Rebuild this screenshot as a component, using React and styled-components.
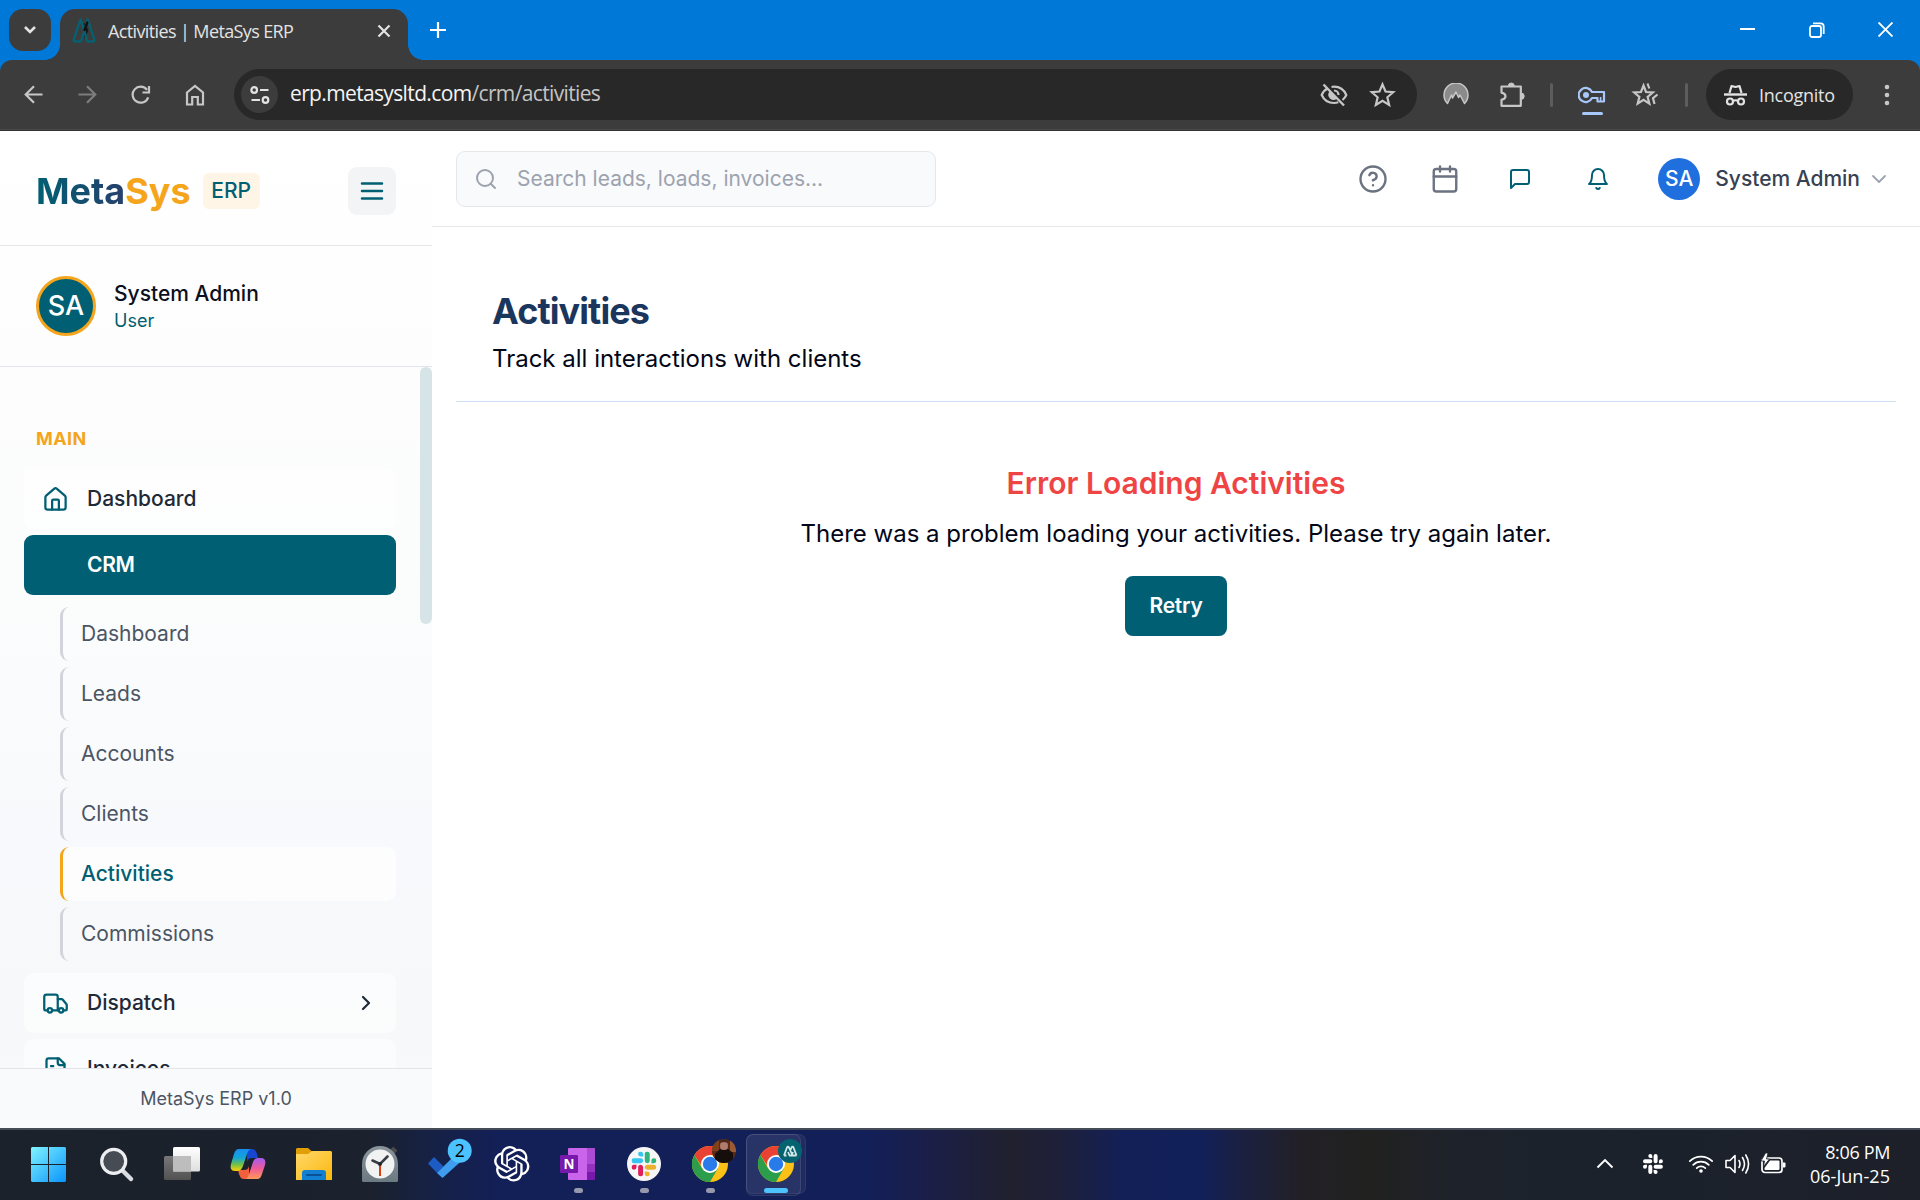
import React from "react";
import styled, { createGlobalStyle, css } from "styled-components";

const Global = createGlobalStyle`
  * { box-sizing: border-box; }
  html, body { margin: 0; padding: 0; overflow: hidden; background: #fff; }
  button { font: inherit; border: 0; padding: 0; margin: 0; background: none; color: inherit; }
`;

const ui = `"Open Sans", "Noto Sans", sans-serif`;
const teal = "#005f73";
const amber = "#f4a51c";

const Screen = styled.div`
  width: 1920px;
  height: 1200px;
  display: flex;
  flex-direction: column;
  overflow: hidden;
  background: #fff;
  font-family: Inter, sans-serif;
`;

/* ---------- browser chrome ---------- */

const TitleBar = styled.header`
  height: 60px;
  flex: none;
  display: flex;
  background: #0078d7;
  padding-left: 9px;
  font-family: ${ui};
`;
const TabSearch = styled.button`
  width: 42px;
  height: 42px;
  margin-top: 9px;
  border-radius: 14px;
  background: #3c3c3c;
  display: grid;
  place-items: center;
`;
const Tab = styled.div`
  position: relative;
  width: 348px;
  height: 51px;
  margin: 9px 0 0 9px;
  padding: 0 17px 8px 12px;
  border-radius: 15px 15px 0 0;
  background: #3c3c3c;
  display: flex;
  align-items: center;
  &::before, &::after {
    content: "";
    position: absolute;
    bottom: 0;
    width: 15px;
    height: 15px;
  }
  &::before { right: 100%; background: radial-gradient(circle at 0 0, transparent 14.5px, #3c3c3c 15px); }
  &::after { left: 100%; background: radial-gradient(circle at 100% 0, transparent 14.5px, #3c3c3c 15px); }
`;
const TabTitle = styled.span`
  flex: 1;
  margin-left: 12px;
  font-size: 18px;
  letter-spacing: -0.62px;
  color: #e3e3e3;
  white-space: nowrap;
`;
const NewTab = styled.button`
  width: 60px;
  height: 60px;
  display: grid;
  place-items: center;
`;
const WindowButtons = styled.div`
  margin-left: auto;
  display: flex;
`;
const WindowButton = styled.button`
  width: 69px;
  height: 59px;
  display: grid;
  place-items: center;
`;
const ToolbarBack = styled.div`
  height: 71px;
  flex: none;
  background: #0078d7;
`;
const Toolbar = styled.div`
  height: 71px;
  display: flex;
  align-items: flex-start;
  padding: 9px 0 0 6px;
  background: #3c3c3c;
  border-radius: 12px 12px 0 0;
  border-bottom: 1px solid #343436;
  box-shadow: inset 0 -1px 0 #4a4a4a;
  font-family: ${ui};
  > * { flex: none; }
`;
const NavButton = styled.button`
  width: 54px;
  height: 51px;
  display: grid;
  place-items: center;
`;
const AddressBar = styled.div`
  width: 1183px;
  height: 51px;
  margin-left: 12px;
  padding: 0 11px 0 7px;
  border-radius: 26px;
  background: #282828;
  display: flex;
  align-items: center;
`;
const SiteInfo = styled.span`
  width: 37px;
  height: 37px;
  border-radius: 50%;
  background: #3c3c3c;
  display: grid;
  place-items: center;
`;
const Url = styled.span`
  flex: 1;
  margin-left: 12px;
  font-size: 21px;
  letter-spacing: -0.64px;
  line-height: 49px;
  height: 51px;
  color: #c4c4c4;
  b { font-weight: 400; color: #f4f4f4; }
`;
const BarIcon = styled.span`
  width: ${(p) => p.$w || 48}px;
  height: 51px;
  display: grid;
  place-items: center;
`;
const Extensions = styled.div`
  display: flex;
  align-items: center;
  padding-left: 11px;
`;
const Divider = styled.i`
  width: 3px;
  height: 24px;
  border-radius: 2px;
  background: #5d5d5d;
  margin: ${(p) => p.$m};
`;
const KeyIcon = styled(BarIcon)`
  position: relative;
  &::after {
    content: "";
    position: absolute;
    left: 50%;
    margin-left: -10.5px;
    bottom: 5px;
    width: 21px;
    height: 3px;
    border-radius: 2px;
    background: #a8c7fa;
  }
`;
const Incognito = styled.div`
  width: 147px;
  height: 51px;
  border-radius: 26px;
  background: #282828;
  display: flex;
  align-items: center;
  padding-left: 18px;
  gap: 12px;
  font-size: 18px;
  letter-spacing: -0.25px;
  color: #e3e3e3;
`;

/* ---------- application ---------- */

const AppArea = styled.div`
  height: 997px;
  flex: none;
  display: flex;
`;
const Sidebar = styled.aside`
  width: 432px;
  flex: none;
  display: flex;
  flex-direction: column;
  background: linear-gradient(180deg, #ffffff 0%, #fdfdfd 24%, #fbfcfc 48%, #f8f9fc 72%, #f6f8f9 90%, #f9f9fc 100%);
`;
const Brand = styled.div`
  height: 115px;
  flex: none;
  display: flex;
  align-items: center;
  padding: 5px 36px 0;
  border-bottom: 1px solid #e4e6ea;
`;
const Logo = styled.div`
  font-size: 36px;
  font-weight: 700;
  line-height: 54px;
  display: flex;
`;
const LogoMain = styled.span`
  color: transparent;
  background: linear-gradient(90deg, ${teal}, #27406b);
  -webkit-background-clip: text;
  background-clip: text;
`;
const LogoAccent = styled.span`
  color: ${amber};
`;
const Badge = styled.span`
  height: 36px;
  width: 57px;
  margin-left: 12px;
  border-radius: 6px;
  background: #fef5e7;
  color: ${teal};
  font-size: 21px;
  font-weight: 500;
  line-height: 36px;
  text-align: center;
`;
const MenuButton = styled.button`
  width: 48px;
  height: 48px;
  margin-left: auto;
  border-radius: 9px;
  background: #f3f4f6;
  display: grid;
  place-items: center;
`;
const Profile = styled.div`
  height: 121px;
  flex: none;
  display: flex;
  align-items: center;
  padding: 0 36px 1px;
  gap: 18px;
  border-bottom: 1px solid #e2e4ea;
`;
const Avatar = styled.span`
  width: 60px;
  height: 60px;
  border-radius: 50%;
  border: 3px solid ${amber};
  background: ${teal};
  color: #fff;
  font-size: 27px;
  font-weight: 500;
  line-height: 54px;
  text-align: center;
`;
const ProfileText = styled.div`
  padding-top: 2px;
`;
const ProfileName = styled.div`
  font-size: 21px;
  font-weight: 500;
  line-height: 28px;
  color: #0b1020;
`;
const ProfileRole = styled.div`
  font-size: 18px;
  line-height: 26px;
  color: ${teal};
`;
const NavScroll = styled.div`
  flex: 1;
  min-height: 0;
  overflow: hidden;
  display: flex;
  justify-content: space-between;
`;
const NavList = styled.nav`
  width: 396px;
  padding: 58px 0 0 24px;
`;
const ScrollThumb = styled.div`
  width: 12px;
  height: 257px;
  border-radius: 6px;
  background: #d6e4e8;
`;
const SectionLabel = styled.div`
  height: 27px;
  margin: 0 0 17px 12px;
  font-size: 18px;
  font-weight: 700;
  line-height: 27px;
  letter-spacing: 0.45px;
  color: ${amber};
`;
const NavItem = styled.a`
  height: 60px;
  margin-bottom: 6px;
  padding: 0 18px;
  border-radius: 9px;
  display: flex;
  align-items: center;
  font-size: 21px;
  font-weight: 500;
  color: #1f2937;
  background: rgba(255, 255, 255, 0.55);
  ${(p) => p.$active && css`
    background: ${teal};
    color: #fff;
    font-weight: 600;
    letter-spacing: -0.3px;
  `}
`;
const NavIcon = styled.span`
  width: 27px;
  height: 27px;
  margin-right: 18px;
  color: ${teal};
`;
const NavText = styled.span`
  flex: 1;
  padding-bottom: 2px;
`;
const SubList = styled.div`
  padding: 6px 0 12px 36px;
  display: grid;
  gap: 6px;
`;
const SubItem = styled.a`
  height: 54px;
  padding-left: 18px;
  border-left: 3px solid ${(p) => (p.$active ? amber : "#d1d5db")};
  border-radius: 9px;
  font-size: 21px;
  font-weight: ${(p) => (p.$active ? 500 : 400)};
  line-height: 54px;
  color: ${(p) => (p.$active ? teal : "#4b5563")};
  background: ${(p) => (p.$active ? "rgba(255,255,255,.7)" : "transparent")};
`;
const SideFooter = styled.div`
  height: 60px;
  flex: none;
  border-top: 1px solid #e2e4e9;
  background: #f9fafc;
  font-size: 18px;
  line-height: 59px;
  text-align: center;
  color: #4b5563;
`;
const Main = styled.main`
  flex: 1;
  display: flex;
  flex-direction: column;
`;
const TopBar = styled.div`
  height: 96px;
  flex: none;
  display: flex;
  align-items: center;
  padding: 0 29px 0 24px;
  border-bottom: 1px solid #e5e7eb;
`;
const SearchBox = styled.div`
  width: 480px;
  height: 56px;
  border: 1px solid #e5e7eb;
  border-radius: 9px;
  background: #f9fafb;
  display: flex;
  align-items: center;
  padding-left: 17px;
  gap: 19px;
  font-size: 21px;
  color: #9ca3af;
`;
const TopActions = styled.div`
  margin-left: auto;
  display: flex;
  align-items: center;
`;
const TopIcon = styled.button`
  width: ${(p) => p.$w}px;
  height: 60px;
  display: grid;
  place-items: center;
  color: ${(p) => p.$color};
`;
const UserChip = styled.div`
  display: flex;
  align-items: center;
  margin-left: 21px;
  font-size: 21px;
  font-weight: 500;
  color: #374151;
`;
const SmallAvatar = styled.span`
  width: 42px;
  height: 42px;
  margin-right: 15px;
  border-radius: 50%;
  background: #206fdf;
  color: #fff;
  line-height: 42px;
  text-align: center;
`;
const ChevronBox = styled.span`
  margin-left: 7px;
  height: 24px;
  color: #9ca3af;
`;
const PageHeader = styled.section`
  margin: 0 24px;
  height: 175px;
  flex: none;
  padding: 62px 36px 0;
  border-bottom: 1px solid #cfe0f7;
`;
const PageTitle = styled.h1`
  margin: 0;
  font-size: 36px;
  font-weight: 700;
  line-height: 45px;
  letter-spacing: -0.9px;
  color: #1b365d;
`;
const PageSub = styled.p`
  margin: 7px 0 0;
  font-size: 24px;
  line-height: 36px;
  color: #020617;
`;
const ErrorPanel = styled.section`
  margin: 0 24px;
  padding-top: 60px;
  display: flex;
  flex-direction: column;
  align-items: center;
`;
const ErrorTitle = styled.h2`
  margin: 0;
  font-size: 30px;
  font-weight: 600;
  line-height: 42px;
  color: #ef4444;
`;
const ErrorText = styled.p`
  margin: 12px 0 0;
  font-size: 24px;
  line-height: 36px;
  color: #020617;
`;
const RetryButton = styled.button`
  width: 102px;
  height: 60px;
  margin-top: 24px;
  padding-bottom: 2px;
  border-radius: 8px;
  background: ${teal};
  color: #fff;
  font-size: 21px;
  font-weight: 600;
  letter-spacing: -0.25px;
`;

/* ---------- taskbar ---------- */

const Taskbar = styled.footer`
  height: 72px;
  flex: none;
  display: flex;
  padding-left: 16px;
  border-top: 2px solid #454b57;
  background: linear-gradient(90deg, #1c222b 0, #1b212d 370px, #162145 430px, #131f57 500px, #131f58 870px,
    #1b1f48 930px, #20202e 1010px, #1e203a 1060px, #132058 1125px, #122059 1200px, #1b2042 1240px,
    #222026 1300px, #21211f 1370px, #1e222a 1450px, #1b222c 1580px, #1c212b 1760px, #1d2029 1920px);
`;
const TaskSlot = styled.div`
  position: relative;
  width: 66px;
  height: 70px;
  svg { display: block; position: relative; }
`;
const ActiveBack = styled.div`
  position: absolute;
  left: 4px;
  top: 4px;
  width: 60px;
  height: 60px;
  border-radius: 7px;
  background: rgba(255, 255, 255, 0.06);
  border: 1px solid rgba(255, 255, 255, 0.06);
  &::after {
    content: "";
    position: absolute;
    left: -1px;
    top: -1px;
    width: 53px;
    height: 60px;
    border-radius: 7px;
    background: rgba(255, 255, 255, 0.04);
    border: 1px solid rgba(255, 255, 255, 0.09);
  }
`;
const Tray = styled.div`
  margin-left: auto;
  display: flex;
  align-items: center;
  padding: 0 30px 3px 0;
  color: #fff;
  font-family: ${ui};
`;
const TrayIcon = styled.span`
  width: ${(p) => p.$w}px;
  height: 28px;
  display: grid;
  place-items: center;
`;
const Clock = styled.div`
  width: 93px;
  font-size: 18px;
  line-height: 24px;
  text-align: right;
  white-space: nowrap;
`;
const ClockLine = styled.div`
  letter-spacing: ${(p) => p.$ls}px;
`;

/* ---------- icons ---------- */

const Line = ({ size = 24, sw = 2, color = "currentColor", children, ...rest }) => (
  <svg width={size} height={size} viewBox="0 0 24 24" fill="none" stroke={color} strokeWidth={sw}
    strokeLinecap="round" strokeLinejoin="round" style={{ display: "block" }} {...rest}>{children}</svg>
);

const Slack = ({ mono, ...rest }) => (
  <svg viewBox="0 0 54 54" {...rest}>
    <path fill={mono || "#36C5F0"} d="M19.712.133a5.381 5.381 0 0 0-5.376 5.387 5.381 5.381 0 0 0 5.376 5.386h5.376V5.52A5.381 5.381 0 0 0 19.712.133m0 14.365H5.376A5.381 5.381 0 0 0 0 19.884a5.381 5.381 0 0 0 5.376 5.387h14.336a5.381 5.381 0 0 0 5.376-5.387 5.381 5.381 0 0 0-5.376-5.386" />
    <path fill={mono || "#2EB67D"} d="M53.76 19.884a5.381 5.381 0 0 0-5.376-5.386 5.381 5.381 0 0 0-5.376 5.386v5.387h5.376a5.381 5.381 0 0 0 5.376-5.387m-14.336 0V5.52A5.381 5.381 0 0 0 34.048.133a5.381 5.381 0 0 0-5.376 5.387v14.364a5.381 5.381 0 0 0 5.376 5.387 5.381 5.381 0 0 0 5.376-5.387" />
    <path fill={mono || "#ECB22E"} d="M34.048 54a5.381 5.381 0 0 0 5.376-5.387 5.381 5.381 0 0 0-5.376-5.386h-5.376v5.386A5.381 5.381 0 0 0 34.048 54m0-14.365h14.336a5.381 5.381 0 0 0 5.376-5.386 5.381 5.381 0 0 0-5.376-5.387H34.048a5.381 5.381 0 0 0-5.376 5.387 5.381 5.381 0 0 0 5.376 5.386" />
    <path fill={mono || "#E01E5A"} d="M0 34.249a5.381 5.381 0 0 0 5.376 5.386 5.381 5.381 0 0 0 5.376-5.386v-5.387H5.376A5.381 5.381 0 0 0 0 34.25m14.336-.001v14.364A5.381 5.381 0 0 0 19.712 54a5.381 5.381 0 0 0 5.376-5.387V34.25a5.381 5.381 0 0 0-5.376-5.387 5.381 5.381 0 0 0-5.376 5.387" />
  </svg>
);

const Favicon = () => (
  <svg width="24" height="25" viewBox="0 0 24 25" fill="none" strokeLinejoin="round" strokeLinecap="round">
    <path d="M12.500 6.500l2.500 6-3 6" stroke="#16191b" strokeWidth="2.600" />
    <path d="M8.500 1.500L1.800 21.500q-.3 2 1.500 2h4.400q1.200 0 1.600-1.200L12.500 13.500 8.500 1.500z" stroke="#056072" strokeWidth="2.400" />
    <path d="M15.800 1.500L12 12l3 10.300q.4 1.200 1.600 1.200h4.200q1.700 0 1.500-2z" stroke="#056072" strokeWidth="2.400" />
    <path d="M15.300 4.500L12.500 12" stroke="#111" strokeWidth="2.400" />
  </svg>
);

const Task = ({ children }) => <svg width="66" height="70" viewBox="0 0 66 70">{children}</svg>;

const ChromeMark = () => (
  <g transform="translate(34 34)">
    <circle r="18" fill="#fbc116" />
    <path d="M-15.590 -9A18 18 0 0 1 15.590 -9L0 -9L-7 4z" fill="#e94235" />
    <path d="M-15.590 -9A18 18 0 0 0 0 18L7.800 4.500L-7.800 4.500z" fill="#2c9e4b" />
    <circle r="9" fill="#fff" />
    <circle r="7.200" fill="#2a7bea" />
  </g>
);
const Dot = () => <rect x="30" y="58" width="9" height="5" rx="2.500" fill="#9699ad" />;

const openai = "M22.2819 9.8211a5.9847 5.9847 0 0 0-.5157-4.9108 6.0462 6.0462 0 0 0-6.5098-2.9A6.0651 6.0651 0 0 0 4.9807 4.1818a5.9847 5.9847 0 0 0-3.9977 2.9 6.0462 6.0462 0 0 0 .7427 7.0966 5.98 5.98 0 0 0 .511 4.9107 6.051 6.051 0 0 0 6.5146 2.9001A5.9847 5.9847 0 0 0 13.2599 24a6.0557 6.0557 0 0 0 5.7718-4.2058 5.9894 5.9894 0 0 0 3.9977-2.9001 6.0557 6.0557 0 0 0-.7475-7.0729zm-9.022 12.6081a4.4755 4.4755 0 0 1-2.8764-1.0408l.1419-.0804 4.7783-2.7582a.7948.7948 0 0 0 .3927-.6813v-6.7369l2.02 1.1686a.071.071 0 0 1 .038.052v5.5826a4.504 4.504 0 0 1-4.4945 4.4944zm-9.6607-4.1254a4.4708 4.4708 0 0 1-.5346-3.0137l.142.0852 4.783 2.7582a.7712.7712 0 0 0 .7806 0l5.8428-3.3685v2.3324a.0804.0804 0 0 1-.0332.0615L9.74 19.9502a4.4992 4.4992 0 0 1-6.1408-1.6464zM2.3408 7.8956a4.485 4.485 0 0 1 2.3655-1.9728V11.6a.7664.7664 0 0 0 .3879.6765l5.8144 3.3543-2.0201 1.1685a.0757.0757 0 0 1-.071 0l-4.8303-2.7865A4.504 4.504 0 0 1 2.3408 7.872zm16.5963 3.8558L13.1038 8.364 15.1192 7.2a.0757.0757 0 0 1 .071 0l4.8303 2.7913a4.4944 4.4944 0 0 1-.6765 8.1042v-5.6772a.79.79 0 0 0-.407-.667zm2.0107-3.0231l-.142-.0852-4.7735-2.7818a.7759.7759 0 0 0-.7854 0L9.409 9.2297V6.8974a.0662.0662 0 0 1 .0284-.0615l4.8303-2.7866a4.4992 4.4992 0 0 1 6.6802 4.66zM8.3065 12.863l-2.02-1.1638a.0804.0804 0 0 1-.038-.0567V6.0742a4.4992 4.4992 0 0 1 7.3757-3.4537l-.142.0805L8.704 5.459a.7948.7948 0 0 0-.3927.6813zm1.0976-2.3654l2.602-1.4998 2.6069 1.4998v2.9994l-2.5974 1.4997-2.6067-1.4997Z";

const taskIcons = [
  <Task key="start">
    <defs><linearGradient id="win" x1="15" y1="17" x2="50" y2="52" gradientUnits="userSpaceOnUse"><stop stopColor="#80f4ff" /><stop offset="1" stopColor="#0a93fb" /></linearGradient></defs>
    <path fill="url(#win)" d="M16 17h16v17H15V18zM33 17h16l1 1v16H33zM15 35h17v17H16l-1-1zM33 35h17v16l-1 1H33z" />
  </Task>,
  <Task key="search">
    <path d="M41 41l8 8" stroke="#d9dce2" strokeWidth="4.500" strokeLinecap="round" />
    <circle cx="31.700" cy="31.300" r="12" fill="#474b54" stroke="#eceef1" strokeWidth="3.200" />
  </Task>,
  <Task key="views">
    <defs>
      <linearGradient id="tv" x2="0" y2="1"><stop stopColor="#fff" /><stop offset="1" stopColor="#dedede" /></linearGradient>
      <linearGradient id="tg" x2="0" y2="1"><stop stopColor="#777" /><stop offset="1" stopColor="#525252" /></linearGradient>
    </defs>
    <rect x="16" y="26" width="27" height="24" rx="1.500" fill="url(#tg)" />
    <rect x="25" y="17" width="27" height="24.500" rx="1.500" fill="url(#tv)" />
    <path d="M25 26h18v15.500H25z" fill="#bdbdbd" />
  </Task>,
  <Task key="copilot">
    <defs>
      <linearGradient id="ca" x1="0" y1="0" x2="0" y2="1"><stop stopColor="#1a8df0" /><stop offset=".4" stopColor="#12a5d8" /><stop offset=".7" stopColor="#6fc04a" /><stop offset="1" stopColor="#ffd400" /></linearGradient>
      <linearGradient id="cb" x1="0" y1="0" x2="0" y2="1"><stop stopColor="#a55cf0" /><stop offset=".5" stopColor="#ee5a9a" /><stop offset="1" stopColor="#ff9a55" /></linearGradient>
    </defs>
    <path d="M33 19h5c3 0 4 2 5 5l1 4h-6c-3 0-4 1-5 4z" fill="#1746d0" />
    <path d="M35 49h-5c-3 0-4-2-5-5l-1-4h6c3 0 4-1 5-4z" fill="#f0603c" />
    <path d="M25 19h13c-3 0-4 2-5 5l-4 12c-1 3-3 5-6 5h-2c-4 0-5-3-4-7l3-10c1-3 2-5 5-5z" fill="url(#ca)" />
    <path d="M43 49H30c3 0 4-2 5-5l4-12c1-3 3-4 6-4h2c4 0 5 3 4 7l-3 9c-1 3-2 5-5 5z" fill="url(#cb)" />
  </Task>,
  <Task key="files">
    <defs><linearGradient id="fo" x2="1" y2="1"><stop stopColor="#ffd869" /><stop offset="1" stopColor="#fbb80f" /></linearGradient></defs>
    <path d="M17 18h11l4 3.500v7H16V19z" fill="#e09f06" />
    <path d="M16 24h12l4-3h19l1 1v28H16z" fill="url(#fo)" />
    <path d="M22 50v-7q0-3 3-3h18q3 0 3 3v7z" fill="#1280d2" />
    <path d="M27 45h14" stroke="#0b4f96" strokeWidth="2" strokeLinecap="round" />
  </Task>,
  <Task key="clock">
    <defs><linearGradient id="cl" x2="0" y2="1"><stop stopColor="#8a949b" /><stop offset="1" stopColor="#6c7a82" /></linearGradient></defs>
    <rect x="45" y="18" width="6" height="5" rx="1" transform="rotate(42 48 20)" fill="#4a4a48" />
    <path d="M16 51V34a18 18 0 0 1 36 0v17l-1 1H17z" fill="url(#cl)" />
    <circle cx="34" cy="34" r="14.500" fill="#f1f2f2" />
    <path d="M26.500 30.500L34 34l7.500-7.500" stroke="#3a3d42" strokeWidth="2.600" fill="none" strokeLinecap="round" />
    <path d="M34 34v12" stroke="#d9400d" strokeWidth="2" />
    <circle cx="34" cy="34" r="2" fill="#26292c" />
  </Task>,
  <Task key="todo">
    <path d="M16 33.500l6-6.500 9.500 9.500-6.500 6.500z" fill="#1c5cc4" />
    <path d="M25 43l24-24 6.500 6.500L30.500 48z" fill="#3f9df0" />
    <circle cx="47.700" cy="20.700" r="12" fill="#4cc2ff" />
    <text x="47.700" y="27" textAnchor="middle" fontFamily="Open Sans, sans-serif" fontSize="17.500" fill="#000">2</text>
  </Task>,
  <Task key="gpt"><path transform="translate(16 16) scale(1.480)" fill="#fff" d={openai} /></Task>,
  <Task key="onenote">
    <path d="M24 19q0-1 1-1h18v32H25q-1 0-1-1z" fill="#ca64ea" />
    <path d="M43 18h8v8h-8z" fill="#ae4bd5" /><path d="M43 26h8v8h-8z" fill="#ae4bd5" /><path d="M43 34h8v8h-8z" fill="#9332bf" /><path d="M43 42h8v7q0 1-1 1h-7z" fill="#7719aa" />
    <rect x="16" y="25" width="18" height="18" rx="1" fill="#7719aa" />
    <text x="25" y="39" textAnchor="middle" fontFamily="Open Sans, sans-serif" fontWeight="700" fontSize="13.500" fill="#fff">N</text>
    <Dot />
  </Task>,
  <Task key="slack">
    <circle cx="34" cy="34" r="17" fill="#f6f6f6" />
    <Slack x="21.500" y="21.500" width="25" height="25" /><Dot />
  </Task>,
  <Task key="chrome">
    <ChromeMark />
    <defs>
      <clipPath id="ph"><circle cx="48" cy="21" r="12" /></clipPath>
      <filter id="soft"><feGaussianBlur stdDeviation=".7" /></filter>
    </defs>
    <g clipPath="url(#ph)">
      <path d="M36 9h24v24H36z" fill="#5c2b17" />
      <g filter="url(#soft)">
        <path d="M36 9h7v12h-7z" fill="#80401f" /><path d="M54 9h6v13h-6z" fill="#9a5a34" />
        <ellipse cx="48" cy="16" rx="4" ry="5.500" fill="#b07c6c" />
        <path d="M43.500 13q1-4 4.500-4t4.500 4l-4.500-1z" fill="#4a281c" />
        <path d="M44 19q4 2 8 0l5 4v12H39v-11z" fill="#170d0d" />
      </g>
    </g>
    <Dot />
  </Task>,
  <Task key="chrome-active">
    <ChromeMark />
    <circle cx="48" cy="21" r="12" fill="#04636e" />
    <path d="M42 25.500l3-8q1-1.800 2 0l3.500 8h-3L46 22M54.500 25.500l-3-8q-1-1.800-2 0L48 21M51 22l-1.500 3.500h5M42 25.500h2.500" fill="none" stroke="#d6e8ea" strokeWidth="1.800" strokeLinejoin="round" />
    <rect x="22" y="58" width="24" height="5" rx="2.500" fill="#4cc2ff" />
  </Task>,
];

const gray = "#c7c7c7";
const star = "M12 3.600l2.500 5.900 6.400.600-4.900 4.200 1.500 6.300L12 17.200l-5.500 3.400L8 14.300 3.100 10.100l6.400-.600z";

const Browser = () => (
  <>
    <TitleBar>
      <TabSearch><svg width="14" height="10" viewBox="0 0 14 10"><path d="M2 2l5 5 5-5" fill="none" stroke="#e3e3e3" strokeWidth="2.600" /></svg></TabSearch>
      <Tab>
        <Favicon />
        <TabTitle>Activities | MetaSys ERP</TabTitle>
        <svg width="14" height="14" viewBox="0 0 14 14"><path d="M1.500 1.500l11 11M12.500 1.500l-11 11" stroke="#e3e3e3" strokeWidth="2.200" /></svg>
      </Tab>
      <NewTab><svg width="16" height="16" viewBox="0 0 16 16"><path d="M8 0v16M0 8h16" stroke="#fff" strokeWidth="2.200" /></svg></NewTab>
      <WindowButtons>
        <WindowButton><svg width="15" height="15" viewBox="0 0 15 15"><path d="M0 7h15" stroke="#fff" strokeWidth="2" /></svg></WindowButton>
        <WindowButton><svg width="16" height="16" viewBox="0 0 16 16" fill="none" stroke="#fff" strokeWidth="1.800"><rect x="1" y="4" width="11" height="11" rx="2" /><path d="M4 1.300h7.500q3.200 0 3.200 3.200V12" /></svg></WindowButton>
        <WindowButton><svg width="15" height="15" viewBox="0 0 15 15"><path d="M.5.5l14 14M14.500.5l-14 14" stroke="#fff" strokeWidth="1.900" /></svg></WindowButton>
      </WindowButtons>
    </TitleBar>
    <ToolbarBack>
      <Toolbar>
        <NavButton><svg width="19" height="19" viewBox="0 0 19 19"><path d="M18.500 9.500H2M10 1.200L1.700 9.500l8.300 8.300" fill="none" stroke={gray} strokeWidth="2.200" /></svg></NavButton>
        <NavButton><svg width="19" height="19" viewBox="0 0 19 19"><path d="M.5 9.500H17M9 1.200l8.300 8.300L9 17.800" fill="none" stroke="#7d7d7d" strokeWidth="2.200" /></svg></NavButton>
        <NavButton><svg width="20" height="20" viewBox="0 0 20 20"><path d="M17.200 12.300A8 8 0 1 1 16 4.800M18 1v6.500h-6.500" fill="none" stroke={gray} strokeWidth="2.200" /></svg></NavButton>
        <NavButton><svg width="20" height="22" viewBox="0 0 20 22"><path d="M2 8.500L10 2l8 6.500V20.500h-5.200V13H7.200v7.500H2z" fill="none" stroke={gray} strokeWidth="2.200" /></svg></NavButton>
        <AddressBar>
          <SiteInfo><svg width="20" height="18" viewBox="0 0 20 18" fill="none" stroke="#e3e3e3" strokeWidth="2.200"><circle cx="4.200" cy="4" r="2.800" /><path d="M10 4h8.500M1.500 14H10" /><circle cx="15.500" cy="14" r="2.800" /></svg></SiteInfo>
          <Url><b>erp.metasysltd.com</b>/crm/activities</Url>
          <BarIcon>
            <svg width="28" height="26" viewBox="0 0 28 26" fill="none" stroke={gray} strokeWidth="2.200">
              <path d="M8 6.300Q3.500 8.500 1.700 13q3.600 8 12.300 8 2.300 0 4.300-.700M11.500 5q1.300-.300 2.500-.300 8.700 0 12.300 8.300-1.300 3-3.800 5" />
              <path d="M9.500 9.500a5.200 5.200 0 0 0 7.300 7.300z" fill={gray} stroke="none" /><path d="M14 8.500a4.500 4.500 0 0 1 4.500 4.500" /><path d="M3.500 2.500l20.500 21" strokeWidth="2.400" />
            </svg>
          </BarIcon>
          <BarIcon><Line size={29} sw={1.8} color={gray} strokeLinejoin="miter"><path d={star} /></Line></BarIcon>
        </AddressBar>
        <Extensions>
          <BarIcon $w={56}>
            <svg width="26" height="24" viewBox="0 0 26 24"><path d="M4.500 20.500A12 12 0 1 1 21.500 20.500L17 12l-1.500 2.500L13 9l-3.500 6L8.500 12z" fill="#8b8b8b" stroke="#c7c7c7" strokeWidth="1.500" strokeLinejoin="round" /></svg>
          </BarIcon>
          <BarIcon $w={56}>
            <svg width="26" height="26" viewBox="0 0 26 26"><path d="M2.500 4.500h19.300v19.300H2.500v-6q4-1 4-3.600t-4-3.600z" fill="none" stroke={gray} strokeWidth="2.200" strokeLinejoin="round" /><path d="M9.300 4a3 3 0 0 1 6 0zM22 11a3.200 3.200 0 0 1 0 6.400z" fill={gray} stroke={gray} /></svg>
          </BarIcon>
          <Divider $m="0 14px 0 10px" />
          <KeyIcon $w={50}>
            <svg width="28" height="18" viewBox="0 0 28 18" fill="none" stroke="#a8c7fa" strokeWidth="2.200"><path d="M14 6a7 7 0 1 0 0 6h5.500v3.500h6.500V6z" strokeLinejoin="round" /><circle cx="8" cy="9" r="3" fill="#a8c7fa" stroke="none" /><path d="M22.600 11v4" strokeWidth="1.600" /></svg>
          </KeyIcon>
          <BarIcon $w={56}>
            <svg width="28" height="26" viewBox="0 0 28 26" fill="none" stroke={gray} strokeWidth="2.200"><path d="M12.500 3.500l2.500 6.500 6.800.500-5.200 4.300 1.700 6.800-5.800-3.700-5.800 3.700L8.400 14.800 3.200 10.500l6.800-.500z" /><path d="M16.500 1.500l1.800 5M26.500 12.500l-4.500 3.700 1.500 5.800" /></svg>
          </BarIcon>
          <Divider $m="0 18px 0 12px" />
        </Extensions>
        <Incognito>
          <svg width="23" height="22" viewBox="0 0 23 22" fill="none" stroke="#e3e3e3" strokeWidth="2.200"><path d="M5.500 9L7.500 2l4 1 4-1 2 7" strokeLinejoin="round" fill="none" /><path d="M0 10.500h23" strokeWidth="2.400" /><circle cx="6" cy="17.500" r="3" /><circle cx="17" cy="17.500" r="3" /><path d="M9 17q2.500-1.500 5 0" /></svg>
          Incognito
        </Incognito>
        <BarIcon $w={67}><svg width="6" height="22" viewBox="0 0 6 22" fill={gray}><circle cx="3" cy="3" r="2.300" /><circle cx="3" cy="11" r="2.300" /><circle cx="3" cy="19" r="2.300" /></svg></BarIcon>
      </Toolbar>
    </ToolbarBack>
  </>
);

const subItems = ["Dashboard", "Leads", "Accounts", "Clients", "Activities", "Commissions"];

export default function App() {
  return (
    <Screen>
      <Global />
      <Browser />
      <AppArea>
        <Sidebar>
          <Brand>
            <Logo><LogoMain>Meta</LogoMain><LogoAccent>Sys</LogoAccent></Logo>
            <Badge>ERP</Badge>
            <MenuButton><Line size={30} color={teal}><path d="M4 6h16M4 12h16M4 18h16" /></Line></MenuButton>
          </Brand>
          <Profile>
            <Avatar>SA</Avatar>
            <ProfileText><ProfileName>System Admin</ProfileName><ProfileRole>User</ProfileRole></ProfileText>
          </Profile>
          <NavScroll>
            <NavList>
              <SectionLabel>MAIN</SectionLabel>
              <NavItem>
                <NavIcon><Line size={27}><path d="M15 21v-8a1 1 0 0 0-1-1h-4a1 1 0 0 0-1 1v8" /><path d="M3 10a2 2 0 0 1 .709-1.528l7-5.999a2 2 0 0 1 2.582 0l7 5.999A2 2 0 0 1 21 10v9a2 2 0 0 1-2 2H5a2 2 0 0 1-2-2z" /></Line></NavIcon>
                <NavText>Dashboard</NavText>
              </NavItem>
              <NavItem $active><NavIcon /><NavText>CRM</NavText></NavItem>
              <SubList>
                {subItems.map((s) => <SubItem key={s} $active={s === "Activities"}>{s}</SubItem>)}
              </SubList>
              <NavItem>
                <NavIcon><Line size={27}><path d="M14 18V6a2 2 0 0 0-2-2H4a2 2 0 0 0-2 2v11a1 1 0 0 0 1 1h2" /><path d="M15 18H9" /><path d="M19 18h2a1 1 0 0 0 1-1v-3.650a1 1 0 0 0-.220-.624l-3.480-4.350A1 1 0 0 0 17.520 8H14" /><circle cx="17" cy="18" r="2" /><circle cx="7" cy="18" r="2" /></Line></NavIcon>
                <NavText>Dispatch</NavText>
                <Line size={24} sw={2.2}><path d="m9 18 6-6-6-6" /></Line>
              </NavItem>
              <NavItem>
                <NavIcon><Line size={27}><path d="M15 2H6a2 2 0 0 0-2 2v16a2 2 0 0 0 2 2h12a2 2 0 0 0 2-2V7Z" /><path d="M14 2v4a2 2 0 0 0 2 2h4" /><path d="M10 9H8M16 13H8M16 17H8" /></Line></NavIcon>
                <NavText>Invoices</NavText>
              </NavItem>
            </NavList>
            <ScrollThumb />
          </NavScroll>
          <SideFooter>MetaSys ERP v1.0</SideFooter>
        </Sidebar>
        <Main>
          <TopBar>
            <SearchBox>
              <Line size={24}><circle cx="11" cy="11" r="8" /><path d="m21 21-4.300-4.300" /></Line>
              Search leads, loads, invoices...
            </SearchBox>
            <TopActions>
              <TopIcon $w={72} $color="#6b7280"><Line size={30} sw={1.9}><circle cx="12" cy="12" r="10" /><path d="M9.090 9a3 3 0 0 1 5.830 1c0 2-3 3-3 3M12 17h.010" /></Line></TopIcon>
              <TopIcon $w={72} $color="#6b7280"><Line size={30} sw={1.9}><path d="M8 2v4M16 2v4M3 10h18" /><rect x="3" y="4" width="18" height="18" rx="2" /></Line></TopIcon>
              <TopIcon $w={78} $color={teal}><Line size={24}><path d="M21 15a2 2 0 0 1-2 2H7l-4 4V5a2 2 0 0 1 2-2h14a2 2 0 0 1 2 2z" /></Line></TopIcon>
              <TopIcon $w={78} $color={teal}><Line size={24}><path d="M6 8a6 6 0 0 1 12 0c0 7 3 9 3 9H3s3-2 3-9M10.300 21a1.940 1.940 0 0 0 3.400 0" /></Line></TopIcon>
              <UserChip>
                <SmallAvatar>SA</SmallAvatar>
                System Admin
                <ChevronBox><Line size={24} sw={1.8}><path d="m6 9 6 6 6-6" /></Line></ChevronBox>
              </UserChip>
            </TopActions>
          </TopBar>
          <PageHeader>
            <PageTitle>Activities</PageTitle>
            <PageSub>Track all interactions with clients</PageSub>
          </PageHeader>
          <ErrorPanel>
            <ErrorTitle>Error Loading Activities</ErrorTitle>
            <ErrorText>There was a problem loading your activities. Please try again later.</ErrorText>
            <RetryButton>Retry</RetryButton>
          </ErrorPanel>
        </Main>
      </AppArea>
      <Taskbar>
        {taskIcons.map((icon, i) => (
          <TaskSlot key={icon.key}>{i === 11 && <ActiveBack />}{icon}</TaskSlot>
        ))}
        <Tray>
          <TrayIcon $w={46}><svg width="18" height="11" viewBox="0 0 18 11"><path d="M1.500 9.500L9 2l7.500 7.500" fill="none" stroke="#fff" strokeWidth="1.900" /></svg></TrayIcon>
          <TrayIcon $w={49}><Slack mono="#fff" width="20" height="20" /></TrayIcon>
          <TrayIcon $w={48}>
            <svg width="26" height="20" viewBox="0 0 26 20" fill="none" stroke="#fff" strokeWidth="1.700" strokeLinecap="round"><path d="M1.800 7.200a16 16 0 0 1 22.400 0M5.200 10.900a11 11 0 0 1 15.600 0M8.700 14.200a6.200 6.200 0 0 1 8.600 0" /><circle cx="13" cy="17" r="1.800" fill="#fff" stroke="none" /></svg>
          </TrayIcon>
          <TrayIcon $w={24}>
            <svg width="25" height="22" viewBox="0 0 25 22" fill="none" stroke="#fff" strokeWidth="1.600" strokeLinecap="round" strokeLinejoin="round"><path d="M1 7.500h4l5-5v17l-5-5H1z" /><path d="M14 7.500q2 3.500 0 7M17.500 4.500q4 6.500 0 13M20.800 2q5.500 9 0 18" /></svg>
          </TrayIcon>
          <TrayIcon $w={48}>
            <svg width="26" height="22" viewBox="0 0 26 22"><rect x="2" y="5" width="20" height="14.500" rx="3" fill="none" stroke="#fff" strokeWidth="1.700" /><path d="M10 7.500h8.500q1 0 1 1V16q0 1-1 1H5.500q-1 0-1-1v-1z" fill="#fff" /><path d="M23 9.500h1.500q1 0 1 1v3q0 1-1 1H23z" fill="#fff" /><path d="M5.500 0L1 8h3.500L3.500 13.500 9.500 6H6.500L8 0z" fill="#fff" stroke="#1c212b" strokeWidth=".8" /></svg>
          </TrayIcon>
          <Clock><ClockLine $ls={-0.35}>8:06 PM</ClockLine><ClockLine $ls={0.05}>06-Jun-25</ClockLine></Clock>
        </Tray>
      </Taskbar>
    </Screen>
  );
}
